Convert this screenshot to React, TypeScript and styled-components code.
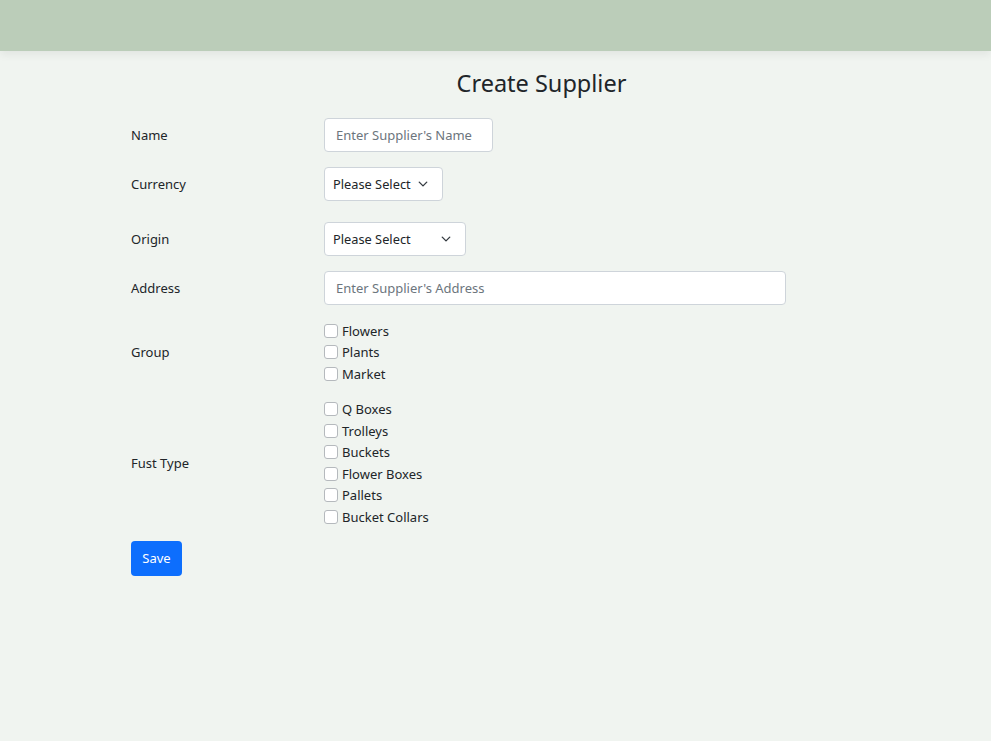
import React from "react";
import styled, { createGlobalStyle } from "styled-components";

const GlobalStyle = createGlobalStyle`
  body {
    margin: 0;
    background: #f0f4f0;
    font-family: "Noto Sans", "Open Sans", sans-serif;
    color: #212529;
  }
`;

const NavBar = styled.div`
  height: 51px;
  background: #bbcdb9;
  box-shadow: 0 4px 8px rgba(0, 0, 0, 0.06);
`;

const Page = styled.div`
  padding: 0 39px 0 131px;
`;

const Title = styled.h3`
  margin: 16px 0 19px;
  text-align: center;
  font-size: 23.5px;
  font-weight: 400;
  line-height: 32px;
`;

const Row = styled.div<{ $gap?: number }>`
  display: flex;
  align-items: center;
  margin-bottom: ${(p) => p.$gap ?? 15}px;
`;

const Label = styled.label`
  width: 193px;
  font-size: 13px;
`;

const TextInput = styled.input<{ $width: number }>`
  box-sizing: border-box;
  width: ${(p) => p.$width}px;
  height: 34px;
  padding: 0 11px;
  border: 1px solid #ced4da;
  border-radius: 4px;
  background: #fff;
  font-family: inherit;
  font-size: 13px;
  color: #212529;
  &::placeholder {
    color: #6c757d;
  }
`;

const SelectBox = styled.div<{ $width: number }>`
  box-sizing: border-box;
  width: ${(p) => p.$width}px;
  height: 34px;
  padding: 0 14px 0 8px;
  display: flex;
  align-items: center;
  justify-content: space-between;
  border: 1px solid #ced4da;
  border-radius: 4px;
  background: #fff;
  font-size: 12.8px;
  white-space: nowrap;
`;

const Checks = styled.div`
  display: flex;
  flex-direction: column;
`;

const CheckRow = styled.label`
  display: flex;
  align-items: center;
  height: 21.5px;
  font-size: 13px;
`;

const Box = styled.span`
  box-sizing: border-box;
  width: 14px;
  height: 14px;
  margin-right: 4px;
  border: 1px solid #b5b9bd;
  border-radius: 3px;
  background: #fff;
`;

const SaveButton = styled.button`
  width: 51px;
  height: 35px;
  padding: 0;
  border: none;
  border-radius: 4px;
  background: #0d6efd;
  color: #fff;
  font-family: inherit;
  font-size: 13px;
`;

const Chevron = () => (
  <svg width="10" height="10" viewBox="0 0 16 16" fill="none">
    <path d="M2 5l6 6 6-6" stroke="#343a40" strokeWidth="2.2" strokeLinecap="round" strokeLinejoin="round" />
  </svg>
);

const groups = ["Flowers", "Plants", "Market"];
const fustTypes = ["Q Boxes", "Trolleys", "Buckets", "Flower Boxes", "Pallets", "Bucket Collars"];

export default function App() {
  return (
    <>
      <GlobalStyle />
      <NavBar />
      <Page>
        <Title>Create Supplier</Title>
        <Row>
          <Label>Name</Label>
          <TextInput $width={169} placeholder="Enter Supplier's Name" />
        </Row>
        <Row $gap={21}>
          <Label>Currency</Label>
          <SelectBox $width={119}>
            Please Select <Chevron />
          </SelectBox>
        </Row>
        <Row>
          <Label>Origin</Label>
          <SelectBox $width={142}>
            Please Select <Chevron />
          </SelectBox>
        </Row>
        <Row $gap={15}>
          <Label>Address</Label>
          <TextInput $width={462} placeholder="Enter Supplier's Address" />
        </Row>
        <Row $gap={14}>
          <Label>Group</Label>
          <Checks>
            {groups.map((g) => (
              <CheckRow key={g}>
                <Box />
                {g}
              </CheckRow>
            ))}
          </Checks>
        </Row>
        <Row $gap={13}>
          <Label>Fust Type</Label>
          <Checks>
            {fustTypes.map((f) => (
              <CheckRow key={f}>
                <Box />
                {f}
              </CheckRow>
            ))}
          </Checks>
        </Row>
        <SaveButton>Save</SaveButton>
      </Page>
    </>
  );
}
